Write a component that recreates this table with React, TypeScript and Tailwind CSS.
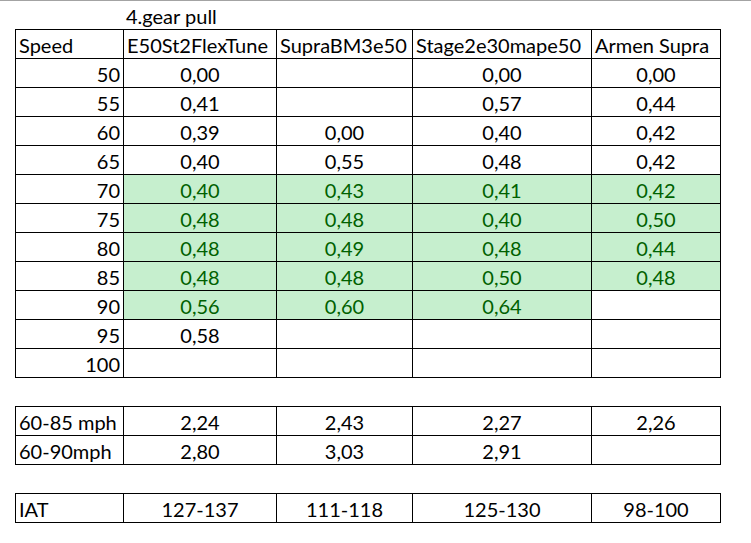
import React from "react";

type Row = {
  speed: string;
  values: string[];
  green: boolean[];
};

const headers = ["E50St2FlexTune", "SupraBM3e50", "Stage2e30mape50", "Armen Supra"];

const rows: Row[] = [
  { speed: "50", values: ["0,00", "", "0,00", "0,00"], green: [false, false, false, false] },
  { speed: "55", values: ["0,41", "", "0,57", "0,44"], green: [false, false, false, false] },
  { speed: "60", values: ["0,39", "0,00", "0,40", "0,42"], green: [false, false, false, false] },
  { speed: "65", values: ["0,40", "0,55", "0,48", "0,42"], green: [false, false, false, false] },
  { speed: "70", values: ["0,40", "0,43", "0,41", "0,42"], green: [true, true, true, true] },
  { speed: "75", values: ["0,48", "0,48", "0,40", "0,50"], green: [true, true, true, true] },
  { speed: "80", values: ["0,48", "0,49", "0,48", "0,44"], green: [true, true, true, true] },
  { speed: "85", values: ["0,48", "0,48", "0,50", "0,48"], green: [true, true, true, true] },
  { speed: "90", values: ["0,56", "0,60", "0,64", ""], green: [true, true, true, false] },
  { speed: "95", values: ["0,58", "", "", ""], green: [false, false, false, false] },
  { speed: "100", values: ["", "", "", ""], green: [false, false, false, false] },
];

const summary = [
  { label: "60-85 mph", values: ["2,24", "2,43", "2,27", "2,26"] },
  { label: "60-90mph", values: ["2,80", "3,03", "2,91", ""] },
];

const grid = "grid grid-cols-[108px_153px_136px_179px_129px]";
const cell = "flex h-[29px] items-end border-r border-b border-black pb-[3px] leading-none";

const App: React.FC = () => {
  return (
    <div
      className="h-[543px] w-[751px] overflow-hidden border-t border-[#a3a3a3] bg-white text-[20px] text-black"
      style={{ fontFamily: "Lato, 'Open Sans', sans-serif" }}
    >
      <div className="flex h-[28px] items-end pb-[3px] pl-[126px] leading-none">4.gear pull</div>

      <div className="ml-[15px] w-[706px]">
        <div className={`${grid} border-l border-t border-black`}>
          <div className={`${cell} px-[3px]`}>Speed</div>
          {headers.map((h) => (
            <div key={h} className={`${cell} px-[3px]`}>
              {h}
            </div>
          ))}
          {rows.map((row) => (
            <React.Fragment key={row.speed}>
              <div className={`${cell} justify-end px-[3px]`}>{row.speed}</div>
              {row.values.map((v, i) => (
                <div
                  key={i}
                  className={`${cell} justify-center ${
                    row.green[i] ? "bg-[#c6efce] text-[#006100]" : ""
                  }`}
                >
                  {v}
                </div>
              ))}
            </React.Fragment>
          ))}
        </div>

        <div className={`${grid} mt-[28px] border-l border-t border-black`}>
          {summary.map((row) => (
            <React.Fragment key={row.label}>
              <div className={`${cell} px-[3px]`}>{row.label}</div>
              {row.values.map((v, i) => (
                <div key={i} className={`${cell} justify-center`}>
                  {v}
                </div>
              ))}
            </React.Fragment>
          ))}
        </div>

        <div className={`${grid} mt-[28px] border-l border-t border-black`}>
          <div className={`${cell} px-[3px]`}>IAT</div>
          {["127-137", "111-118", "125-130", "98-100"].map((v) => (
            <div key={v} className={`${cell} justify-center`}>
              {v}
            </div>
          ))}
        </div>
      </div>
    </div>
  );
};

export default App;
